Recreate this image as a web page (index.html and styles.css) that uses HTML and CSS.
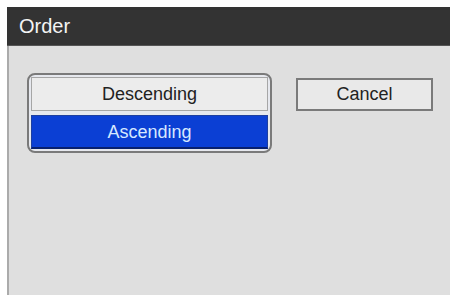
FILE: index.html
```html
<!DOCTYPE html>
<html>
<head>
<meta charset="utf-8">
<link rel="stylesheet" href="styles.css">
</head>
<body>
<div class="window">
  <div class="titlebar">Order</div>
  <div class="content">
    <div class="group">
      <div class="opt">Descending</div>
      <div class="opt selected">Ascending</div>
    </div>
    <div class="btn">Cancel</div>
  </div>
</div>
</body>
</html>
```
FILE: styles.css
```css
html, body {
  margin: 0;
  padding: 0;
  background: #ffffff;
  font-family: "Liberation Sans", Arial, sans-serif;
}
.window {
  margin: 7px 0 0 7px;
  width: 443px;
  height: 288px;
  display: flex;
  flex-direction: column;
}
.titlebar {
  height: 38px;
  background: #333333;
  color: #f4f4f4;
  font-size: 20px;
  line-height: 38px;
  padding-left: 12px;
  border-bottom: 1px solid #555;
}
.content {
  flex: 1;
  background: #dfdfdf;
  border-left: 2px solid #ababab;
  padding: 27px 0 0 18px;
  display: flex;
  align-items: flex-start;
  gap: 24px;
}
.group {
  width: 237px;
  padding: 2px;
  border: 2px solid #7a7a7a;
  border-radius: 8px;
  display: flex;
  flex-direction: column;
  gap: 4px;
  background: #e6e8ee;
}
.opt {
  height: 32px;
  border: 1px solid #a6a6a6;
  background: #ececec;
  color: #222;
  font-size: 18px;
  line-height: 32px;
  text-align: center;
}
.opt.selected {
  background: #0b3fd4;
  border-color: #1d3fa0;
  border-bottom: 2px solid #08206e;
  height: 31px;
  color: #d6e8ff;
}
.btn {
  margin-top: 5px;
  width: 133px;
  height: 29px;
  border: 2px solid #7a7a7a;
  background: #e9e9e9;
  color: #222;
  font-size: 18px;
  line-height: 29px;
  text-align: center;
}
```
